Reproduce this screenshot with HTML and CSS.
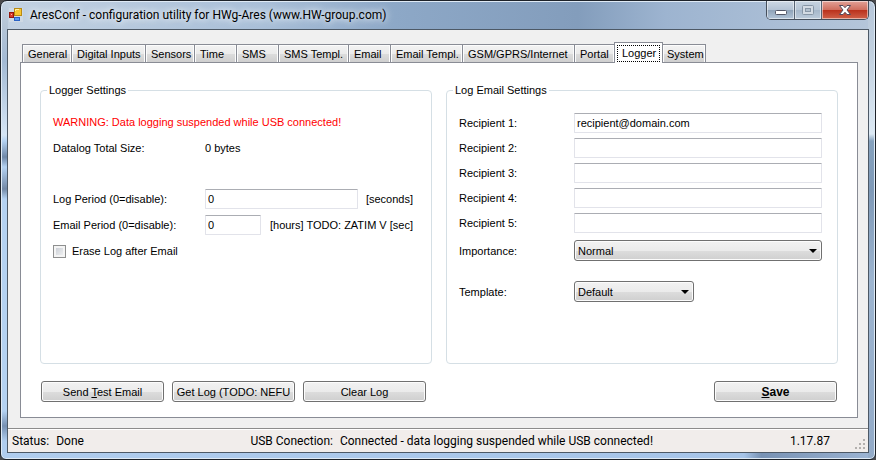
FILE: index.html
```html
<!DOCTYPE html>
<html lang="en">
<head>
    <title>AresConf</title>
    <meta charset="UTF-8">
    <link rel="stylesheet" href="styles.css">
</head>
<body>
<div class="window">
    <header class="titlebar">
        <svg class="app-icon" width="14" height="14" viewBox="0 0 14 14">
            <rect x="0" y="0" width="14" height="14" fill="#dce2e8" opacity="0.5"/>
            <rect x="5.5" y="0.5" width="7" height="7" fill="#f7c62f" stroke="#b98a12"/>
            <path d="M6.5 3V1.500H10" stroke="#fff0a8" fill="none"/>
            <rect x="0.5" y="4.500" width="4" height="5" fill="#d8392b" stroke="#93170e"/>
            <rect x="2" y="6" width="1" height="1" fill="#ffb7a5"/>
            <rect x="5.500" y="9.500" width="5" height="3" fill="#5b9cf0" stroke="#2b62c4"/>
        </svg>
        <h1>AresConf - configuration utility for HWg-Ares (www.HW-group.com)</h1>
        <div class="caption-buttons">
            <button type="button" class="cap" aria-label="Minimize">
                <svg width="14" height="10" viewBox="0 0 14 10"><rect x="1.500" y="5.500" width="11" height="4" rx="1" fill="#fff" stroke="#535666"/></svg>
            </button>
            <button type="button" class="cap" aria-label="Maximize" disabled>
                <svg width="12" height="10" viewBox="0 0 12 10"><rect x="0.500" y="0.500" width="11" height="9" rx="1" fill="#d3dbe4" stroke="#8796a6"/><rect x="3.500" y="3.500" width="5" height="3" fill="#b2c0ce" stroke="#8796a6"/></svg>
            </button>
            <button type="button" class="cap close" aria-label="Close">
                <svg width="12" height="10" viewBox="0 0 12 10"><path d="M0.500 0.500H4L6 2.700L8 0.500H11.500L8 5L11.500 9.500H8L6 7.300L4 9.500H0.500L4 5Z" fill="#fff" stroke="#53485a" stroke-width="1" stroke-linejoin="round"/></svg>
            </button>
        </div>
    </header>

    <div class="client">
        <main>
            <div class="tabs" role="tablist">
                <button type="button" class="tab" role="tab">General</button>
                <button type="button" class="tab" role="tab">Digital Inputs</button>
                <button type="button" class="tab" role="tab">Sensors</button>
                <button type="button" class="tab" role="tab">Time</button>
                <button type="button" class="tab" role="tab">SMS</button>
                <button type="button" class="tab" role="tab">SMS Templ.</button>
                <button type="button" class="tab" role="tab">Email</button>
                <button type="button" class="tab" role="tab">Email Templ.</button>
                <button type="button" class="tab" role="tab">GSM/GPRS/Internet</button>
                <button type="button" class="tab" role="tab">Portal</button>
                <button type="button" class="tab active" role="tab" aria-selected="true"><span>Logger</span></button>
                <button type="button" class="tab" role="tab">System</button>
            </div>

            <form class="tab-page">
                <div class="groups">
                    <fieldset>
                        <legend>Logger Settings</legend>
                        <div class="rows">
                            <p class="warning">WARNING: Data logging suspended while USB connected!</p>
                            <div class="row size-row">
                                <span>Datalog Total Size:</span>
                                <span>0 bytes</span>
                            </div>
                            <div class="row">
                                <label for="log-period">Log Period (0=disable):</label>
                                <input type="text" id="log-period" value="0">
                                <span class="unit">[seconds]</span>
                            </div>
                            <div class="row">
                                <label for="email-period">Email Period (0=disable):</label>
                                <input type="text" id="email-period" class="short" value="0">
                                <span class="unit">[hours] TODO: ZATIM V [sec]</span>
                            </div>
                            <div class="row check-row">
                                <input type="checkbox" id="erase-log">
                                <label for="erase-log">Erase Log after Email</label>
                            </div>
                        </div>
                    </fieldset>

                    <fieldset>
                        <legend>Log Email Settings</legend>
                        <div class="rows mail-rows">
                            <div class="row">
                                <label for="rcpt1">Recipient 1:</label>
                                <input type="text" id="rcpt1" value="recipient@domain.com">
                            </div>
                            <div class="row">
                                <label for="rcpt2">Recipient 2:</label>
                                <input type="text" id="rcpt2">
                            </div>
                            <div class="row">
                                <label for="rcpt3">Recipient 3:</label>
                                <input type="text" id="rcpt3">
                            </div>
                            <div class="row">
                                <label for="rcpt4">Recipient 4:</label>
                                <input type="text" id="rcpt4">
                            </div>
                            <div class="row">
                                <label for="rcpt5">Recipient 5:</label>
                                <input type="text" id="rcpt5">
                            </div>
                            <div class="row importance-row">
                                <label for="importance">Importance:</label>
                                <div class="combo">
                                    <select id="importance"><option>Normal</option></select>
                                </div>
                            </div>
                            <div class="row template-row">
                                <label for="template">Template:</label>
                                <div class="combo small">
                                    <select id="template"><option>Default</option></select>
                                </div>
                            </div>
                        </div>
                    </fieldset>
                </div>

                <div class="actions">
                    <button type="button" class="btn">Send <u>T</u>est Email</button>
                    <button type="button" class="btn">Get Log (TODO: NEFU</button>
                    <button type="button" class="btn">Clear Log</button>
                    <button type="button" class="btn save"><u>S</u>ave</button>
                </div>
            </form>
        </main>

        <footer class="statusbar">
            <span class="status">Status:</span>
            <span class="state">Done</span>
            <span class="usb">USB Conection:</span>
            <span class="usb-state">Connected - data logging suspended while USB connected!</span>
            <span class="version">1.17.87</span>
            <svg class="grip" width="11" height="11" viewBox="0 0 11 11" fill="#b3b0ae">
                <rect x="8" y="0" width="2" height="2"/>
                <rect x="4" y="4" width="2" height="2"/>
                <rect x="8" y="4" width="2" height="2"/>
                <rect x="0" y="8" width="2" height="2"/>
                <rect x="4" y="8" width="2" height="2"/>
                <rect x="8" y="8" width="2" height="2"/>
            </svg>
        </footer>
    </div>
</div>
</body>
</html>
```
FILE: styles.css
```css
* {
    box-sizing: border-box;
}

body {
    margin: 0;
    background: #4a4a4c;
    color: #000;
    font: 11px/14px "Liberation Sans", Arial, sans-serif;
}

button, input, select {
    font: inherit;
    color: inherit;
}

/* Window frame */
.window {
    display: flex;
    flex-direction: column;
    min-height: 100vh;
    padding: 0 6px 6px;
    border: 1px solid #1d2229;
    border-radius: 7px 7px 6px 6px;
    box-shadow: inset 0 0 0 1px #dfeaf5;
    background:
        linear-gradient(#c3d2e2, #b4c4d6 26px, #a3bad4 60px, #d5e5f5 134px, #b4d2f2 140px, #6f88a8 156px, #b4d2f2 166px, #7389a6 188px, #b4d2f2 198px, #b4d2f2 410px, #7791b3 425px, #b0cdee 440px) left / 7px 100% no-repeat,
        linear-gradient(#b7c7da, #c1d0df 50px, #dce9f4 133px, #86a2be 140px, #7f9ab8 190px, #9db5d0 280px, #93abc8) right / 7px 100% no-repeat,
        linear-gradient(90deg, #c3d2e2, #a9bfd8 30%, #8da8c7 45%, #839dbc 66%, #9db4d0 76%, #b5c6da) top / 100% 29px no-repeat,
        linear-gradient(90deg, #b0cdee, #a6c4e8 85%, #7892b4 87%, #9db5d4);
}

.titlebar {
    display: flex;
    align-items: flex-start;
    height: 28px;
    padding-left: 2px;
}

.app-icon {
    margin-top: 7px;
}

h1 {
    flex: 1;
    margin: 6px 0 0 7px;
    font: 12px/16px Roboto, "Segoe UI", sans-serif;
    white-space: nowrap;
    text-shadow: 0 0 6px #fff, 0 0 10px #e6eef7;
}

.caption-buttons {
    display: flex;
    height: 19px;
    border: 1px solid #454f5c;
    border-top: 0;
    border-radius: 0 0 5px 5px;
    overflow: hidden;
}

.cap {
    display: flex;
    align-items: center;
    justify-content: center;
    width: 28px;
    padding: 0;
    border: 0;
    border-right: 1px solid #566373;
    background: linear-gradient(#cdd8e4, #b4c3d4 48%, #8ea2b8 50%, #b3c5d8);
    box-shadow: inset 0 0 0 1px rgba(255, 255, 255, 0.5);
}

.cap:disabled {
    width: 27px;
    background: linear-gradient(#c6d3e0, #b7c6d6 48%, #a5b7ca 50%, #bccbdb);
}

.cap.close {
    width: 46px;
    border-right: 0;
    background: linear-gradient(#e2a298, #cf6f5f 48%, #b9301b 50%, #d0614a);
}

.client {
    flex: 1;
    display: flex;
    flex-direction: column;
    border: 1px solid #4d5966;
    background: #f0f0f0;
}

main {
    flex: 1;
    display: flex;
    flex-direction: column;
    padding: 12px 10px 10px 12px;
}

/* Tabs */
.tabs {
    display: grid;
    grid-template-columns: 49px 74px 49px 42px 42px 70px 42px 72px 112px 40px 49px 43px;
    align-items: end;
    height: 20px;
    padding-left: 2px;
}

.tab {
    height: 18px;
    padding: 0 0 0 5px;
    border: 1px solid #898c95;
    border-right-width: 0;
    border-bottom: 0;
    background: linear-gradient(#f3f3f3, #ebebeb 50%, #dddddd 51%, #cfcfcf);
    box-shadow: inset 1px 1px 0 #fcfcfc, inset -1px 0 0 #fcfcfc;
    text-align: left;
    white-space: nowrap;
}

.tab:last-child {
    border-right-width: 1px;
}

.tab.active {
    z-index: 1;
    height: 21px;
    margin: 0 0 -1px;
    padding: 2px;
    border-right-width: 1px;
    background: #fff;
    box-shadow: none;
}

.tab.active + .tab {
    padding-left: 4px;
    border-left: 0;
}

.tab.active span {
    display: block;
    height: 17px;
    padding-left: 4px;
    border: 1px dotted #000;
    line-height: 14px;
}

.tab-page {
    flex: 1;
    display: flex;
    flex-direction: column;
    padding: 20px 19px 15px;
    border: 1px solid #898c95;
    background: #fff;
}

/* Group boxes */
.groups {
    flex: 1;
    display: flex;
    gap: 14px;
}

fieldset {
    flex: 1;
    min-width: 0;
    margin: 0;
    padding: 0 9px 0 6px;
    border: 1px solid #d5dfe5;
    border-radius: 4px;
}

legend {
    padding: 0 2px;
}

.rows {
    display: flex;
    flex-direction: column;
    gap: 6px;
    padding: 15px 9px 0 6px;
}

.row {
    display: flex;
    align-items: center;
    min-height: 20px;
}

.row > :first-child {
    flex: 0 0 152px;
}

.warning {
    margin: 0;
    line-height: 20px;
    color: #f00;
}

.size-row {
    margin-bottom: 25px;
}

.unit {
    margin-left: auto;
    white-space: nowrap;
}

input[type="text"] {
    width: 153px;
    height: 20px;
    padding: 0 2px;
    border: 1px solid #e2e3ea;
    border-top-color: #abadb3;
    border-radius: 1px;
    background: #fff;
}

input.short {
    width: 56px;
}

.check-row > input:first-child {
    flex: 0 0 13px;
    height: 13px;
    margin: 0 6px 0 0;
    appearance: none;
    border: 1px solid #8e8f8f;
    background: linear-gradient(135deg, #c3c8d0, #f6f6f6);
    box-shadow: inset 0 0 0 2px #f4f4f4;
}

.mail-rows {
    gap: 5px;
    padding-top: 16px;
    padding-right: 0;
}

.mail-rows .row > :first-child {
    flex-basis: 115px;
}

.mail-rows input[type="text"] {
    flex: 1;
    min-width: 0;
    margin-right: 6px;
}

.combo {
    position: relative;
    flex: 1;
    margin-right: 6px;
}

.combo.small {
    flex: 0 0 120px;
}

.combo::after {
    content: "";
    position: absolute;
    top: 9px;
    right: 5px;
    border: 4px solid transparent;
    border-top-color: #000;
    border-bottom: 0;
    pointer-events: none;
}

select {
    display: block;
    width: 100%;
    height: 21px;
    padding: 0 3px;
    appearance: none;
}

select, .btn {
    border: 1px solid #707070;
    border-radius: 3px;
    background: linear-gradient(#f2f2f2, #ebebeb 50%, #dddddd 51%, #cfcfcf);
    box-shadow: inset 0 0 0 1px #fcfcfc;
}

.importance-row {
    margin-top: 2px;
}

.template-row {
    margin-top: 15px;
}

/* Buttons under the groups */
.actions {
    display: flex;
    gap: 8px;
    padding: 17px 1px 0;
}

.btn {
    width: 123px;
    height: 21px;
    padding: 0;
    white-space: nowrap;
}

.save {
    margin-left: auto;
    font-size: 12px;
    font-weight: bold;
}

/* Status bar */
.statusbar {
    display: flex;
    align-items: center;
    height: 24px;
    padding-left: 4px;
    border-top: 1px solid #8c8c8c;
    background: #f1edeb;
    box-shadow: inset 0 1px 0 #fff;
    font: 12px/16px Roboto, "Segoe UI", sans-serif;
    white-space: nowrap;
}

.state {
    margin-left: 7px;
}

.usb {
    margin-left: auto;
}

.usb-state {
    margin: 0 16% 0 7px;
}

.grip {
    align-self: flex-end;
    margin: 0 2px 2px 25px;
}
```
